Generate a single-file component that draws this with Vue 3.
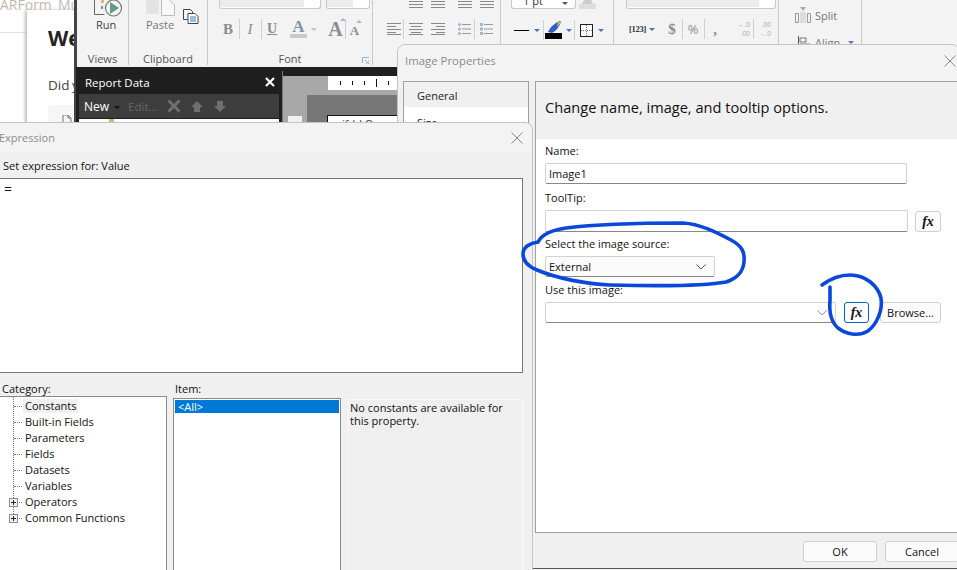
<script setup>
const treeLeaves = ['Constants', 'Built-in Fields', 'Parameters', 'Fields', 'Datasets', 'Variables']
const treeNodes = ['Operators', 'Common Functions']
const rulerTicks = [0, 1, 2, 3, 4, 5]
</script>

<template>
  <div class="desktop">
    <!-- browser page behind everything -->
    <div class="page">
      <div class="tab-title">ARForm_Mu</div>
      <div class="tab-rule"></div>
      <div class="card">
        <div class="card-title">We</div>
        <div class="card-text">Did y</div>
        <div class="card-box">
          <svg width="10" height="10" viewBox="0 0 10 10"><path d="M1 0h5l3 3v7M1 0v10M6 0v3h3" fill="none" stroke="#777"/></svg>
        </div>
      </div>
    </div>

    <!-- report builder window -->
    <div class="builder">
      <div class="ribbon">
        <section class="group g-views">
          <div class="large">
            <svg width="34" height="18" viewBox="0 0 34 18">
              <path d="M1.500 0v14.500h10" fill="none" stroke="#666"/>
              <path d="M8 0h3v3H8z" fill="#e6b85c"/>
              <path d="M8 6h2v3H8z" fill="#6a8fc0"/>
              <circle cx="20.500" cy="8" r="8" fill="#f3f3f3" stroke="#777" stroke-width="1.200"/>
              <path d="M17 2l9 6-9 6z" fill="#5f9e8a"/>
            </svg>
            <span>Run</span>
          </div>
          <div class="group-label">Views</div>
        </section>

        <section class="group g-clip">
          <div class="clip-row">
            <div class="large paste">
              <svg width="30" height="18" viewBox="0 0 30 18">
                <rect x="0" y="0" width="13" height="14" fill="#e3e3e3"/>
                <path d="M15.500 0v15.500h13V5l-5-5" fill="#f8f8f8" stroke="#bbb"/>
              </svg>
              <span class="dim">Paste</span>
            </div>
            <svg class="copy" width="16" height="15" viewBox="0 0 16 15">
              <path d="M.5.500h7l2 2v2M.5.500v10h4" fill="none" stroke="#444"/>
              <path d="M5 4.500h7l3 3v7H5z" fill="#fff" stroke="#444"/>
              <path d="M7 8h6M7 10h6M7 12h6" stroke="#3a78c2"/>
            </svg>
          </div>
          <div class="group-label">Clipboard</div>
        </section>

        <section class="group g-font">
          <div class="boxes">
            <div class="rib-box font-name"><i></i></div>
            <div class="rib-box font-size"><i></i></div>
          </div>
          <div class="tools">
            <b class="g serif t-b">B</b><u class="sep s-1"></u>
            <em class="g serif i t-i">I</em><u class="sep s-2"></u>
            <span class="g serif und t-u">U</span>
            <span class="font-color"><b class="serif">A</b><i></i></span>
            <span class="caret t-c"></span>
            <b class="g serif big">A</b><u class="sep s-3"></u>
            <b class="g serif small">A</b>
          </div>
          <div class="group-label">Font</div>
          <svg class="launcher" width="7" height="7" viewBox="0 0 7 7"><path d="M.5 6V.5H7M3 3l4 4M7 3v4H3" fill="none" stroke="#8fb2d6"/></svg>
        </section>

        <section class="group g-para">
          <div class="para-top">
            <svg v-for="n in 4" :key="n" width="14" height="8" viewBox="0 0 14 8"><path d="M0 1.500h14M0 4.500h14M0 7.500h14" stroke="#888"/></svg>
          </div>
          <div class="tools para-tools">
            <svg class="p1" width="14" height="12" viewBox="0 0 14 12"><path d="M0 .5h14M0 3.500h9M0 6.500h14M0 9.500h9M0 11.500h14" stroke="#888"/></svg>
            <u class="sep pa"></u>
            <svg class="p2" width="14" height="12" viewBox="0 0 14 12"><path d="M0 .5h14M2 3.500h10M0 6.500h14M2 9.500h10M0 11.500h14" stroke="#888"/></svg>
            <svg class="p3" width="14" height="12" viewBox="0 0 14 12"><path d="M0 .5h14M5 3.500h9M0 6.500h14M5 9.500h9M0 11.500h14" stroke="#888"/></svg>
            <svg class="p4" width="13" height="12" viewBox="0 0 13 12"><path d="M4 1.500h9M4 6h9M4 10.500h9" stroke="#999"/><circle cx="1.500" cy="1.500" r="1.500" fill="#9db6d6"/><circle cx="1.500" cy="6" r="1.500" fill="#9db6d6"/><circle cx="1.500" cy="10.500" r="1.500" fill="#9db6d6"/></svg>
            <u class="sep pb"></u>
            <svg class="p5" width="13" height="12" viewBox="0 0 13 12"><path d="M4 1.500h9M4 6h9M4 10.500h9" stroke="#999"/><path d="M0 0h3v3H0zM0 4.500h3v3H0zM0 9h3v3H0z" fill="#9db6d6"/></svg>
          </div>
        </section>

        <section class="group g-border">
          <div class="boxes">
            <div class="rib-box pt">1 pt<span class="mini-caret"></span></div>
            <svg width="17" height="9" viewBox="0 0 17 9"><path d="M5 0h7l2 4H3z" fill="#ccc"/><path d="M0 4h17v5H0z" fill="#ddd"/></svg>
          </div>
          <div class="tools border-tools">
            <span class="line-style"></span><span class="caret blue b1"></span><u class="sep b2"></u>
            <svg class="b3" width="17" height="18" viewBox="0 0 17 18"><path d="M0 12h17v6H0z" fill="#000"/><path d="M3 11c2-5 7-9 12-11l1 1c-2 5-5 9-9 11z" fill="#2f5fc4"/><path d="M13 1l3 0-4 5z" fill="#e2c050"/></svg>
            <span class="caret blue b4"></span><u class="sep b5"></u>
            <svg class="b6" width="13" height="13" viewBox="0 0 13 13"><rect x=".5" y=".5" width="12" height="12" fill="#fff" stroke="#222"/><path d="M6.500 1v11M1 6.500h11" stroke="#777" stroke-dasharray="1 1"/></svg>
            <span class="caret blue b1"></span>
          </div>
        </section>

        <section class="group g-number">
          <div class="boxes"><div class="rib-box num-box"><i></i></div></div>
          <div class="tools num-tools">
            <span class="fmt">[123]</span><span class="caret blue n1"></span>
            <b class="g serif dollar">$</b><u class="sep n2"></u>
            <span class="g pct">%</span><u class="sep n3"></u>
            <b class="g serif comma">,</b>
            <span class="dec d1"><span>←.0</span><span>.00</span></span><u class="sep n4"></u>
            <span class="dec d2"><span>.00</span><span>→.0</span></span>
          </div>
        </section>

        <section class="group g-layout">
          <div class="lay-row split">
            <svg width="16" height="17" viewBox="0 0 16 17"><path d="M.5 6.500h3v9h-3zM12.500 6.500h3v9h-3z" fill="none" stroke="#999"/><path d="M5 5h6v11H5z" fill="#ddd"/><path d="M5 0h6L8 4z" fill="#aaa"/></svg>
            <span>Split</span>
          </div>
          <div class="lay-row align">
            <svg width="14" height="14" viewBox="0 0 14 14"><path d="M.5 0v14" stroke="#555"/><path d="M2 2h6v4H2z" fill="none" stroke="#777"/><path d="M2 7h10v3H2z" fill="#bbb"/></svg>
            <span>Align</span><span class="caret blue"></span>
          </div>
        </section>
      </div>

      <div class="workspace">
        <aside class="report-data">
          <header>
            <span>Report Data</span>
            <svg width="10" height="10" viewBox="0 0 10 10"><path d="M1 1l8 8M9 1l-8 8" stroke="#fff" stroke-width="2.200"/></svg>
          </header>
          <div class="rd-tools">
            <span class="rd-new">New</span><span class="caret dark"></span>
            <span class="rd-edit">Edit...</span>
            <svg width="14" height="14" viewBox="0 0 14 14"><path d="M1.500 1.500l11 11M12.500 1.500l-11 11" stroke="#6f6f6f" stroke-width="3"/></svg>
            <svg class="rd-up" width="12" height="11" viewBox="0 0 12 11"><path d="M6 0l6 6H9v5H3V6H0z" fill="#6f6f6f"/></svg>
            <svg class="rd-down" width="12" height="11" viewBox="0 0 12 11"><path d="M6 11L0 5h3V0h6v5h3z" fill="#6f6f6f"/></svg>
          </div>
          <div class="rd-tree"><i></i></div>
        </aside>
        <div class="canvas">
          <div class="ruler-band">
            <div class="ruler"><i v-for="t in rulerTicks" :key="t" :class="{ major: t === 3 }"></i></div>
          </div>
          <div class="gray-sheet">
            <div class="corner"></div>
            <div class="report-box">
              <div class="report-text">ifdd.O</div>
            </div>
          </div>
        </div>
      </div>
    </div>

    <!-- Image Properties dialog -->
    <div class="dialog image-dialog">
      <div class="title-bar">
        <span>Image Properties</span>
        <svg width="12" height="12" viewBox="0 0 12 12"><path d="M.5.500l11 11M11.500.500l-11 11" stroke="#8a8a8a"/></svg>
      </div>
      <div class="img-body">
        <nav class="img-nav">
          <div class="nav-item active">General</div>
          <div class="nav-item">Size</div>
        </nav>
        <main class="img-panel">
          <h2>Change name, image, and tooltip options.</h2>
          <div class="form">
            <label>Name:</label>
            <div class="input name-input">Image1</div>
            <label class="l-tip">ToolTip:</label>
            <div class="field-row tip-row">
              <div class="input"></div>
              <button class="fx"><span>fx</span></button>
            </div>
            <label>Select the image source:</label>
            <div class="select ext">
              External
              <svg width="10" height="6" viewBox="0 0 10 6"><path d="M.5.500L5 5 9.500.500" fill="none" stroke="#555"/></svg>
            </div>
            <label class="l-use">Use this image:</label>
            <div class="field-row use-row">
              <div class="select use">
                <svg width="10" height="6" viewBox="0 0 10 6"><path d="M.5.500L5 5 9.500.500" fill="none" stroke="#999"/></svg>
              </div>
              <button class="fx focused"><span>fx</span></button>
              <button class="browse">Browse...</button>
            </div>
          </div>
        </main>
      </div>
      <footer class="img-foot">
        <button>OK</button>
        <button>Cancel</button>
      </footer>
    </div>

    <!-- Expression dialog -->
    <div class="dialog expr-dialog">
      <div class="title-bar">
        <span>Expression</span>
        <svg width="12" height="12" viewBox="0 0 12 12"><path d="M.5.500l11 11M11.500.500l-11 11" stroke="#8a8a8a"/></svg>
      </div>
      <div class="expr-body">
        <div class="expr-label">Set expression for: Value</div>
        <div class="expr-area">=</div>
        <div class="expr-grid">
          <div class="col">
            <div class="col-label">Category:</div>
            <div class="tree">
              <div class="tree-line"></div>
              <div v-for="(leaf, i) in treeLeaves" :key="leaf" class="tree-row">
                <span class="dots"></span>
                <span class="tree-text" :class="{ sel: i === 0 }">{{ leaf }}</span>
              </div>
              <div v-for="node in treeNodes" :key="node" class="tree-row">
                <span class="plus"></span>
                <span class="dots short"></span>
                <span class="tree-text">{{ node }}</span>
              </div>
            </div>
          </div>
          <div class="col">
            <div class="col-label item-label">Item:</div>
            <div class="items"><div class="item-sel">&lt;All&gt;</div></div>
          </div>
          <div class="desc">No constants are available for this property.</div>
        </div>
      </div>
    </div>

    <!-- hand-drawn annotations -->
    <svg class="marks" width="957" height="570" viewBox="0 0 957 570">
      <path d="M538 242C542 234 552 230 566 228C590 225 640 223 683 223C700 224 716 232 731 240C742 246 745 252 744 262C743 272 738 278 726 282C700 287 650 286 610 285C585 284 556 278 537 270C527 266 523 260 523 254C523 247 530 243 538 242" fill="none" stroke="#0a48dc" stroke-width="3.600" stroke-linecap="round" stroke-linejoin="round"/>
      <path d="M822 285C830 279 840 275 850 275C866 275 878 286 881 298C883 310 877 324 868 331C858 337 846 334 838 328C831 322 829 312 830 300L830 287" fill="none" stroke="#0a48dc" stroke-width="3.600" stroke-linecap="round" stroke-linejoin="round"/>
    </svg>
  </div>
</template>

<style>
body { margin: 0; overflow: hidden; }
</style>

<style scoped>
.desktop {
  position: relative;
  width: 957px;
  height: 570px;
  overflow: hidden;
  background: #fff;
  font-family: "Open Sans", "Noto Sans", sans-serif;
  font-size: 11px;
  color: #111;
}
button { font-family: inherit; padding: 0; }

/* page */
.page { position: absolute; inset: 0; }
.tab-title { position: absolute; left: 0; top: -4px; font-size: 14px; line-height: 18px; color: #c3b8b0; white-space: nowrap; }
.tab-rule { position: absolute; left: 0; top: 32px; width: 27px; height: 1px; background: #e2e2e2; }
.card {
  position: absolute; left: 27px; top: 10px; width: 60px; height: 120px;
  background: #fff; box-shadow: -2px 0 3px #bbb; padding: 16px 0 0 21px; box-sizing: border-box;
}
.card-title { font-size: 21px; line-height: 24px; font-weight: 700; color: #222; }
.card-text { margin-top: 25px; font-size: 13.500px; word-spacing: -1px; line-height: 20px; color: #444; white-space: nowrap; }
.card-box { margin-top: 10px; width: 40px; height: 30px; background: #f6f6f6; border-radius: 4px; padding: 8px 0 0 14px; box-sizing: border-box; }

/* builder */
.builder { position: absolute; left: 74px; top: 0; width: 883px; height: 570px; background: #444; padding-left: 2px; box-sizing: border-box; }
.ribbon { display: flex; height: 67px; margin-left: 1px; background: #f3f3f3; overflow: hidden; }
.group { position: relative; flex: none; box-sizing: border-box; height: 65px; border-right: 1px solid #c9c9c9; }
.g-views { width: 52px; }
.g-clip { width: 79px; }
.g-font { width: 165px; padding-left: 11px; }
.g-para { width: 128px; }
.g-border { width: 113px; padding-left: 10px; }
.g-number { width: 165px; padding-left: 12px; }
.g-layout { width: 83px; }
.group-label { position: absolute; left: 0; right: 0; top: 52px; text-align: center; font-size: 11px; line-height: 14px; color: #555; }
.launcher { position: absolute; left: 154px; top: 57px; }
.large { display: flex; flex-direction: column; align-items: flex-start; font-size: 11px; color: #444; }
.large span { line-height: 14px; }
.g-views .large { padding-left: 16px; }
.g-views .large span { margin-left: 3px; }
.dim { color: #777; }
.clip-row { display: flex; align-items: flex-start; padding-left: 17px; }
.copy { margin: 9px 0 0 7px; }
.boxes { display: flex; gap: 5px; align-items: flex-start; height: 9px; }
.rib-box { box-sizing: border-box; height: 9px; background: #fff; border: 1px solid #c9c9c9; border-top: 0; border-radius: 0 0 3px 3px; overflow: hidden; padding-right: 16px; }
.rib-box i { display: block; height: 7px; background: #ececec; }
.font-name { width: 102px; }
.font-size { width: 44px; }
.tools { display: flex; align-items: center; height: 22px; margin-top: 9px; color: #8c8c8c; }
.serif { font-family: "Liberation Serif", serif; }
.g { flex: none; text-align: center; font-size: 15px; color: #8c8c8c; line-height: 18px; }
.sep { display: block; width: 1px; height: 20px; background: #d0d0d0; text-decoration: none; flex: none; }
.t-b { width: 14px; margin-left: 2px; }
.s-1 { margin-left: 4px; }
.t-i { width: 20px; font-style: italic; font-weight: 400; }
.s-2 { margin-left: 1px; }
.t-u { width: 20px; text-decoration: underline; font-weight: 700; font-size: 14px; }
.font-color { display: flex; flex-direction: column; align-items: center; flex: none; width: 17px; margin-left: 8px; font-size: 17px; line-height: 14px; color: #7f93a8; }
.font-color i { display: block; width: 17px; height: 4px; background: #c9c9c9; }
.caret { display: block; width: 0; height: 0; border: 3.500px solid transparent; border-top: 3.500px solid #b6c4d6; border-bottom: 0; flex: none; }
.caret.blue { border-top-color: #4a76b8; }
.caret.dark { border-top-color: #111; }
.t-c { margin-left: 4px; }
.big { position: relative; width: 17px; margin-left: 10px; font-size: 20px; }
.big::after, .small::after { content: ""; position: absolute; top: -2px; right: -2px; border: 3px solid transparent; border-top: 0; border-bottom: 3px solid #a9bbd0; }
.s-3 { margin-left: 1px; }
.small { position: relative; width: 11px; margin-left: 3px; font-size: 13px; margin-top: 3px; }

.para-top { display: flex; align-items: flex-start; height: 8px; padding-left: 36px; gap: 8px; }
.para-top svg:nth-child(3) { margin-left: 5px; }
.para-tools { margin-top: 10px; }
.p1 { margin-left: 14px; }
.pa { margin-left: 2px; }
.p2 { margin-left: 5px; }
.p3 { margin-left: 8px; }
.p4 { margin-left: 13px; }
.pb { margin-left: 3px; }
.p5 { margin-left: 5px; }

.pt { width: 65px; height: 9px; margin-right: -2px; font-size: 11px; line-height: 2px; padding: 0 0 0 11px; position: relative; color: #333; }
.mini-caret { position: absolute; right: 7px; top: 2px; border: 3px solid transparent; border-top-color: #555; }
.border-tools { margin-top: 10px; padding-left: 3px; }
.line-style { display: block; flex: none; width: 15px; height: 1px; background: #000; }
.b1 { margin-left: 5px; }
.b2 { margin-left: 3px; }
.b3 { margin-left: 1px; }
.b4 { margin-left: 4px; }
.b5 { margin-left: 2px; }
.b6 { margin-left: 5px; }

.num-box { width: 150px; }
.num-tools { margin-top: 9px; }
.fmt { flex: none; width: 16px; margin-left: 3px; font-family: "Liberation Serif", serif; font-size: 8.500px; font-weight: 700; letter-spacing: -.3px; white-space: nowrap; color: #333; }
.n1 { margin-left: 4px; }
.dollar { width: 14px; margin-left: 10px; }
.n2 { margin-left: 3px; }
.pct { width: 20px; font-size: 13px; }
.n3 { margin-left: 1px; }
.comma { width: 20px; }
.dec { display: flex; flex-direction: column; align-items: flex-end; flex: none; width: 14px; font-size: 6.500px; line-height: 9px; color: #aaa; white-space: nowrap; }
.d1 { margin-left: 11px; }
.n4 { margin-left: 3px; }
.d2 { margin-left: 3px; }

.g-layout { padding: 7px 0 0 16px; }
.lay-row { display: flex; align-items: center; gap: 4px; height: 17px; font-size: 11px; color: #777; }
.lay-row.split { margin-bottom: 10px; }
.align { gap: 3px; }
.align svg { margin-left: 3px; }
.lay-row .caret { margin-left: 5px; }

/* workspace */
.workspace { display: flex; height: 503px; background: #1f1f1f; }
.report-data { flex: none; width: 206px; }
.report-data header { display: flex; align-items: center; justify-content: space-between; height: 27px; padding: 3px 7px 0 9px; box-sizing: border-box; color: #fff; font-size: 11.500px; }
.rd-tools { display: flex; align-items: center; height: 24px; margin: 0 3px; padding-left: 5px; background: #3d3d3d; }
.rd-new { color: #fff; font-size: 12px; }
.rd-tools .caret { margin: 2px 0 0 5px; }
.rd-edit { color: #666; font-size: 11.500px; margin: 0 9px 0 8px; }
.rd-up { margin-left: 10px; }
.rd-down { margin-left: 11px; }
.rd-tree { height: 40px; margin: 1px 3px 0; background: #fff; padding-left: 30px; }
.rd-tree i { display: block; width: 5px; height: 3px; background: #d8b483; }
.canvas { flex: 1; margin-top: 4px; padding-top: 5px; border-left: 1px solid #777; background: #1f1f1f; }
.ruler-band { height: 14px; padding-left: 45px; background: #a8a8a8; }
.ruler { display: flex; align-items: center; gap: 11px; height: 14px; padding-left: 12px; background: #fff; }
.ruler i { display: block; width: 1px; height: 4px; background: #111; }
.ruler i.major { height: 8px; }
.gray-sheet { position: relative; height: 480px; background: linear-gradient(#a8a8a8 0 5px, transparent 5px), linear-gradient(90deg, #a8a8a8 0 24px, #777 24px); }
.corner { position: absolute; left: 5px; top: 26px; width: 14px; height: 12px; background: #f0f0f0; }
.report-box { position: absolute; left: 44px; top: 25px; width: 100px; height: 40px; background: #fff; border: 1px solid #111; }
.report-text { padding-left: 14px; font-size: 11px; color: #333; }

/* dialogs */
.dialog { position: absolute; box-sizing: border-box; background: #f0f0f0; border: 1px solid #c4c4c4; border-radius: 8px 8px 0 0; }
.title-bar { display: flex; align-items: center; justify-content: space-between; background: #f3f3f3; color: #8b8b8b; border-radius: 8px 8px 0 0; }

.image-dialog { left: 397px; top: 44px; width: 563px; height: 528px; }
.image-dialog .title-bar { height: 36px; padding: 0 3px 5px 7px; box-sizing: border-box; font-size: 11.400px; }
.img-body { display: flex; height: 452px; background: #f0f0f0; }
.img-nav { flex: none; width: 126px; height: 300px; margin: 0 0 0 5px; box-sizing: border-box; background: #fff; border: 1px solid #a0a0a0; }
.nav-item { height: 25px; line-height: 27px; padding-left: 13px; color: #222; }
.nav-item + .nav-item { line-height: 31px; }
.nav-item.active { background: #f0f0f0; }
.img-panel { flex: 1; margin-left: 6px; box-sizing: border-box; background: #fff; border: 1px solid #a0a0a0; border-right: 0; }
.img-panel h2 { margin: 0; height: 57px; padding-left: 9px; background: #f0f0f0; font-size: 14.600px; font-weight: 400; line-height: 51px; color: #111; }
.form { display: flex; flex-direction: column; align-items: flex-start; padding: 5px 0 0 9px; }
.form label { display: block; height: 14px; line-height: 14px; margin-bottom: 5px; color: #111; }
.input, .select { box-sizing: border-box; background: #fff; border: 1px solid #d2d2d2; border-bottom-color: #888; border-radius: 2px; height: 21px; }
.name-input { width: 362px; line-height: 19px; padding-left: 3px; margin-bottom: 7px; }
.field-row { display: flex; align-items: center; }
.tip-row { margin-bottom: 5px; }
.tip-row .input { width: 363px; height: 22px; }
.fx {
  box-sizing: border-box; width: 26px; height: 21px; margin-left: 7px; background: #fbfbfb;
  border: 1px solid #d0d0d0; border-radius: 3px;
  font-family: "Liberation Serif", serif; font-weight: 700; font-style: italic; font-size: 14px; line-height: 17px; color: #111;
}
.select { position: relative; display: flex; align-items: center; justify-content: space-between; padding: 0 8px 0 3px; background: #fbfbfb; }
.ext { width: 170px; margin-bottom: 6px; }
.use { width: 291px; justify-content: flex-end; background: #fff; }
.fx.focused { width: 25px; margin-left: 8px; border-color: #0067c0; background: #fdfdfd; }
.browse { box-sizing: border-box; width: 61px; height: 21px; margin-left: 11px; background: #fbfbfb; border: 1px solid #d0d0d0; border-radius: 3px; font-size: 11px; color: #111; }
.img-foot { display: flex; justify-content: flex-end; gap: 8px; height: 36px; padding: 8px 0 0; box-sizing: border-box; border-bottom: 1px solid #555; background: #f0f0f0; }
.img-foot button { width: 74px; height: 21px; background: #fbfbfb; border: 1px solid #d0d0d0; border-radius: 3px; font-size: 11px; color: #111; }

.expr-dialog { left: -8px; top: 122px; width: 541px; height: 460px; }
.expr-dialog .title-bar { height: 30px; padding: 0 9px 1px 6px; box-sizing: border-box; font-size: 11px; }
.expr-body { padding: 5px 9px 0 8px; }
.expr-label { height: 16px; line-height: 16px; padding-left: 2px; margin-bottom: 4px; }
.expr-area { box-sizing: border-box; height: 195px; margin-left: -4px; background: #fff; border: 1px solid #777; padding: 1px 0 0 6px; font-size: 14px; line-height: 17px; }
.expr-grid { display: flex; margin-left: -4px; margin-top: 9px; }
.col { flex: none; }
.col-label { height: 14px; line-height: 14px; padding-left: 5px; }
.tree { position: relative; box-sizing: border-box; width: 170px; height: 190px; background: #fff; border: 1px solid #8a8a8a; padding: 1px 0 0 4px; }
.tree-line { position: absolute; left: 15px; top: 0; height: 121px; border-left: 1px dotted #777; }
.tree-row { position: relative; display: flex; align-items: center; height: 16px; padding-left: 8px; }
.dots { display: block; width: 8px; border-top: 1px dotted #777; margin: 0 1px 0 4px; flex: none; }
.dots.short { width: 3px; margin: 0 1px 0 0; }
.plus { position: relative; z-index: 1; display: block; box-sizing: border-box; flex: none; width: 9px; height: 9px; margin: 0 1px 0 -1px; background: #eef0f4; border: 1px solid #8a8a9a; }
.plus::before { content: ""; position: absolute; left: 1px; top: 3px; width: 5px; height: 1px; background: #223; }
.plus::after { content: ""; position: absolute; left: 3px; top: 1px; width: 1px; height: 5px; background: #223; }
.tree-text { padding: 0 2px; line-height: 14px; white-space: nowrap; }
.tree-text.sel { background: #f0f0f0; }
.item-label { padding-left: 8px; }
.items { box-sizing: border-box; width: 168px; height: 190px; margin: 2px 0 0 6px; background: #fff; border: 1px solid #8a8a8a; padding: 1px; }
.item-sel { height: 13px; line-height: 13px; padding-left: 3px; background: #0078d7; color: #fff; }
.desc { flex: none; box-sizing: border-box; width: 175px; height: 190px; margin: 17px 0 0 7px; padding: 1px 2px 1px 1px; border: 1px solid #f8f8f8; background: #efefef; line-height: 13px; }

.marks { position: absolute; left: 0; top: 0; pointer-events: none; }
</style>
